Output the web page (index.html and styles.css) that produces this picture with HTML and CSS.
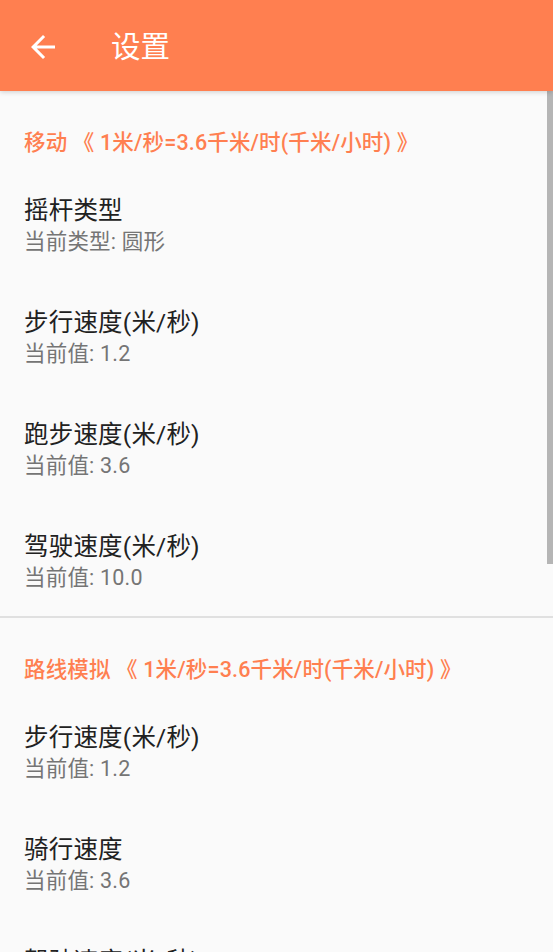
FILE: index.html
```html
<!DOCTYPE html>
<html lang="zh-CN">
<head>
<meta charset="utf-8">
<title>设置</title>
<link rel="stylesheet" href="styles.css">
</head>
<body>
<header class="toolbar">
  <svg class="back" viewBox="0 0 24 24" width="36" height="36"><path d="M20 11H7.83l5.59-5.59L12 4l-8 8 8 8 1.41-1.41L7.83 13H20v-2z" fill="#fff"/></svg>
  <h1 class="title">设置</h1>
</header>
<main class="list">
  <section class="group">
    <div class="category">移动 《 1米/秒=3.6千米/时(千米/小时) 》</div>
    <div class="item"><div class="item-title">摇杆类型</div><div class="item-sub">当前类型: 圆形</div></div>
    <div class="item"><div class="item-title">步行速度(米/秒)</div><div class="item-sub">当前值: 1.2</div></div>
    <div class="item"><div class="item-title">跑步速度(米/秒)</div><div class="item-sub">当前值: 3.6</div></div>
    <div class="item last"><div class="item-title">驾驶速度(米/秒)</div><div class="item-sub">当前值: 10.0</div></div>
  </section>
  <div class="divider"></div>
  <section class="group">
    <div class="category">路线模拟 《 1米/秒=3.6千米/时(千米/小时) 》</div>
    <div class="item"><div class="item-title">步行速度(米/秒)</div><div class="item-sub">当前值: 1.2</div></div>
    <div class="item"><div class="item-title">骑行速度</div><div class="item-sub">当前值: 3.6</div></div>
    <div class="item"><div class="item-title">驾驶速度(米/秒)</div><div class="item-sub">当前值: 10.0</div></div>
  </section>
</main>
<div class="scrollbar"></div>
</body>
</html>
```
FILE: styles.css
```css
html, body {
  margin: 0;
  padding: 0;
}
body {
  width: 553px;
  height: 952px;
  overflow: hidden;
  background: #fafafa;
  font-family: Roboto, "Noto Sans CJK SC", sans-serif;
}
.toolbar {
  position: relative;
  z-index: 2;
  height: 91px;
  background: #ff7f50;
  display: flex;
  align-items: center;
  padding-left: 25px;
  box-shadow: 0 1px 5px rgba(0, 0, 0, 0.18);
}
.back {
  display: block;
  flex: none;
  margin-top: 2px;
}
.title {
  margin: 2px 0 0 50px;
  font-size: 29.5px;
  font-weight: 400;
  color: #fff;
  line-height: 36px;
}
.list {
  display: flex;
  flex-direction: column;
}
.category {
  padding: 38px 24px 13px;
  font-size: 21.5px;
  letter-spacing: 0.15px;
  line-height: 28px;
  font-weight: 500;
  color: #ff7f50;
  white-space: nowrap;
}
.item {
  padding: 25px 24px;
}
.item.last {
  padding-bottom: 23px;
}
.item-title {
  font-size: 24.5px;
  letter-spacing: 0.2px;
  line-height: 32px;
  color: #212121;
  white-space: nowrap;
}
.item-sub {
  font-size: 21.5px;
  letter-spacing: 0.2px;
  line-height: 30px;
  color: #757575;
  white-space: nowrap;
}
.divider {
  height: 2px;
  background: #e0e0e0;
}
.scrollbar {
  position: absolute;
  left: 547px;
  top: 91px;
  width: 6px;
  height: 473px;
  background: #b5b5b5;
}
```
